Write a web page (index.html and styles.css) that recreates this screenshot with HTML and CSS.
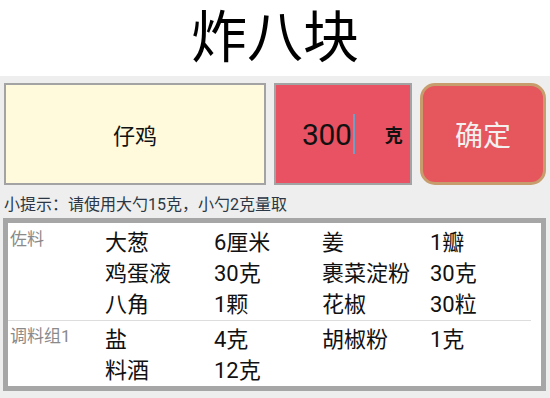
FILE: index.html
```html
<!DOCTYPE html>
<html lang="zh">
<head>
<meta charset="utf-8">
<link rel="stylesheet" href="styles.css">
</head>
<body>
<header class="header"><h1 class="title">炸八块</h1></header>
<div class="controls">
  <div class="name-box">仔鸡</div>
  <div class="qty-box">
    <span class="qty-value">300</span><span class="cursor"></span>
    <span class="unit">克</span>
  </div>
  <button class="confirm">确定</button>
</div>
<p class="hint">小提示：请使用大勺15克，小勺2克量取</p>
<div class="table">
  <div class="group">
    <div class="group-label">佐料</div>
    <div class="items">
      <span>大葱</span><span>6厘米</span><span>姜</span><span>1瓣</span>
      <span>鸡蛋液</span><span>30克</span><span>裹菜淀粉</span><span>30克</span>
      <span>八角</span><span>1颗</span><span>花椒</span><span>30粒</span>
    </div>
  </div>
  <div class="divider"></div>
  <div class="group">
    <div class="group-label">调料组1</div>
    <div class="items">
      <span>盐</span><span>4克</span><span>胡椒粉</span><span>1克</span>
      <span>料酒</span><span>12克</span>
    </div>
  </div>
</div>
</body>
</html>
```
FILE: styles.css
```css
* { box-sizing: border-box; }
html, body { margin: 0; padding: 0; }
body {
  background: #eeeeee;
  font-family: Roboto, "Noto Sans CJK SC", "Noto Sans", sans-serif;
  color: #111;
  width: 550px;
  height: 398px;
  overflow: hidden;
}
.header {
  background: #ffffff;
  height: 76px;
}
.title {
  margin: 0;
  text-align: center;
  font-size: 56px;
  font-weight: normal;
  line-height: 76px;
  color: #000;
}
.controls {
  display: flex;
  gap: 8px;
  height: 102px;
  margin-top: 7px;
  padding: 0 4px;
}
.name-box {
  flex: 1;
  background: #fffadc;
  border: 2px solid #a3a3a3;
  display: flex;
  align-items: center;
  justify-content: center;
  font-size: 22px;
  color: #111;
}
.qty-box {
  width: 138px;
  background: #e85262;
  border: 2px solid #a3a3a3;
  display: flex;
  align-items: center;
  padding-left: 26px;
}
.qty-value {
  font-size: 30px;
  color: #111;
  letter-spacing: -0.3px;
}
.cursor {
  width: 2px;
  height: 40px;
  background: #6f9fc6;
  margin-left: 1px;
}
.unit {
  font-size: 18px;
  font-weight: bold;
  margin-left: 30px;
  color: #111;
}
.confirm {
  width: 126px;
  height: 102px;
  margin: 0;
  padding: 0;
  background: #e5575c;
  border: 3px solid #c79d6d;
  border-radius: 15px;
  font-family: inherit;
  font-size: 28px;
  color: #f4f0f0;
}
.hint {
  margin: 10px 0 0 4px;
  font-size: 16px;
  line-height: 20px;
  color: #2b3744;
}
.table {
  margin: 3px 4px 0 3px;
  border: 5px solid #a6a6a6;
  background: #ffffff;
  padding-top: 1px;
}
.group {
  display: flex;
  padding-top: 3px;
}
.group-label {
  width: 97px;
  padding-left: 2px;
  font-size: 17px;
  line-height: 24px;
  color: #8a8a8a;
}
.items {
  display: grid;
  grid-template-columns: 109px 108px 108px 100px;
  font-size: 22px;
  line-height: 31px;
  color: #111;
}
.divider {
  height: 1px;
  background: #dddddd;
  margin-right: 10px;
}
```
